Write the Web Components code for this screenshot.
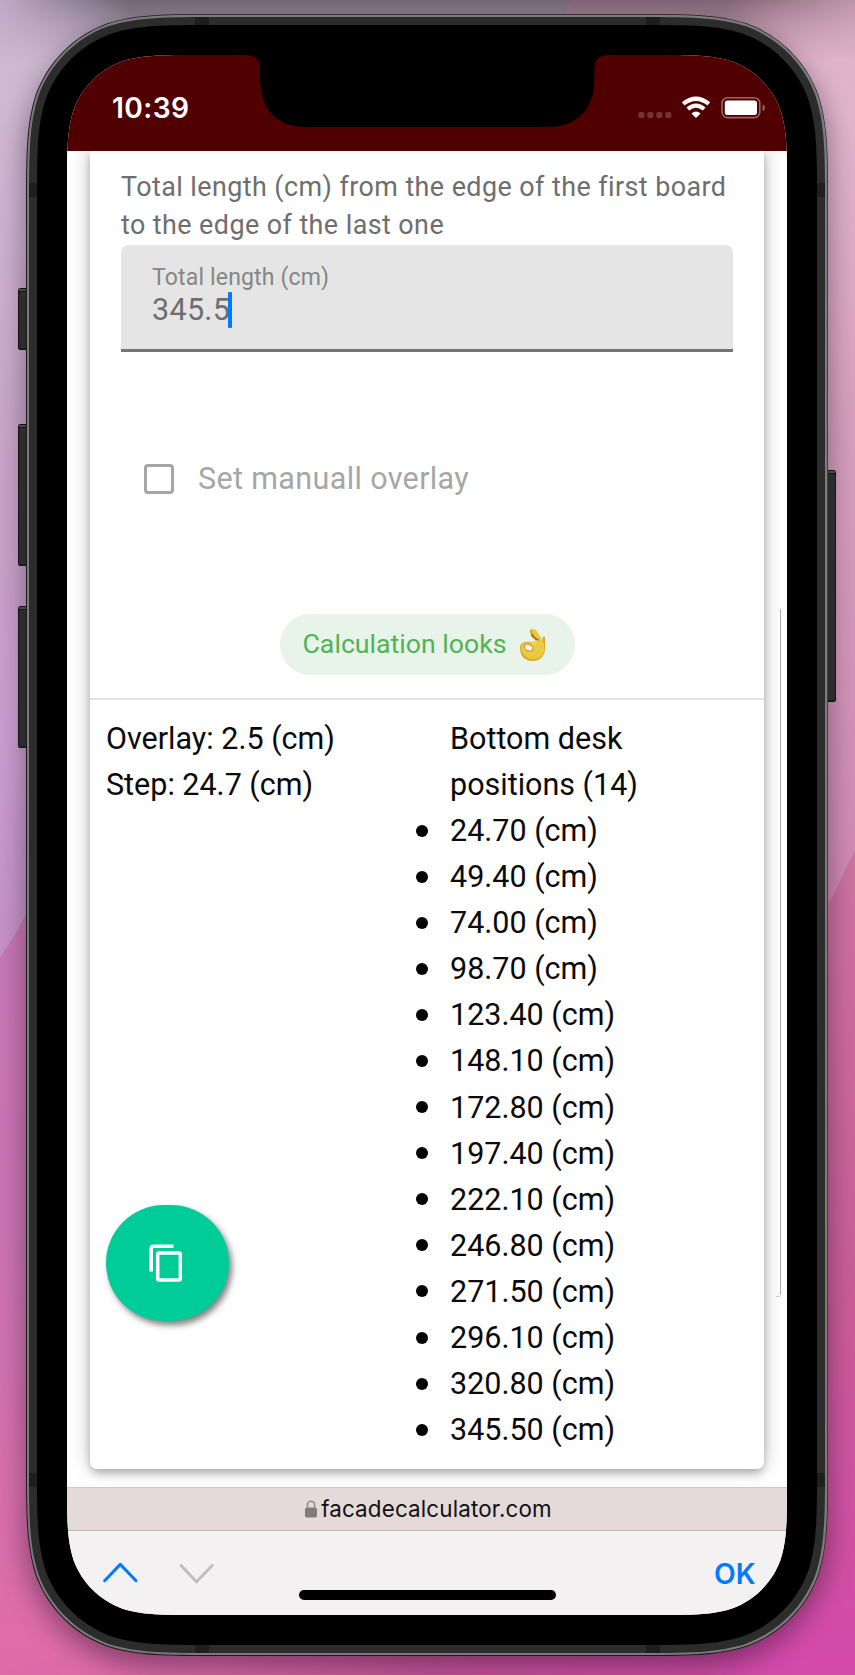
<!DOCTYPE html>
<html lang="en">
<head>
<meta charset="utf-8">
<title>Facade calculator</title>
<style>
html,body{margin:0;height:1675px;overflow:hidden}
body{font-family:Roboto,"Liberation Sans",sans-serif}
</style>
</head>
<body>
<wall-paper>
  <phone-frame>
    <phone-status time="10:39"></phone-status>
    <page-view>
      <calc-card>
        <number-field slot="form" label="Total length (cm)" value="345.5">Total length (cm) from the edge of the first board<br>to the edge of the last one</number-field>
        <check-row slot="form">Set manuall overlay</check-row>
        <result-chip slot="form">Calculation looks</result-chip>
        <div slot="summary">Overlay: 2.5 (cm)</div>
        <div slot="summary">Step: 24.7 (cm)</div>
        <position-list slot="positions" heading="Bottom desk positions (14)" values="24.70 49.40 74.00 98.70 123.40 148.10 172.80 197.40 222.10 246.80 271.50 296.10 320.80 345.50"></position-list>
        <copy-fab slot="fab"></copy-fab>
      </calc-card>
    </page-view>
    <url-bar>facadecalculator.com</url-bar>
    <input-toolbar>OK</input-toolbar>
  </phone-frame>
</wall-paper>
<script>
function define(name, markup, init) {
  const t = document.createElement('template');
  t.innerHTML = markup;
  customElements.define(name, class extends HTMLElement {
    connectedCallback() {
      if (this.shadowRoot) return;
      const root = this.attachShadow({mode: 'open'});
      root.appendChild(t.content.cloneNode(true));
      if (init) init.call(this, root);
    }
  });
}

// Rounded rectangle with continuous-curvature corners.
function smoothRect(x, y, w, h, r) {
  const corner = [[1.52866, 0], [1.08849, 0], [.86841, 0], [.63149, .07491], [.37282, .16906], [.16906, .37282], [.07491, .63149], [0, .86841], [0, 1.08849], [0, 1.52866]];
  const side = (cx, cy, sx, sy, rev) => {
    const p = corner.map(([a, b]) => `${(cx + sx * a * r).toFixed(2)} ${(cy + sy * b * r).toFixed(2)}`);
    if (rev) p.reverse();
    return `L${p[0]}C${p.slice(1).join(' ')}`;
  };
  return ('M' + `${x + w / 2} ${y}` + side(x + w, y, -1, 1) + side(x + w, y + h, -1, -1, true) + side(x, y + h, 1, -1) + side(x, y, 1, 1, true) + 'Z');
}

define('wall-paper', `
<style>
:host{display:block;position:relative;width:855px;height:1675px;overflow:hidden}
svg{position:absolute;inset:0}
.body{position:relative;box-sizing:border-box;height:100%;padding:14px 27px 19px 26px}
</style>
<svg width="855" height="1675">
  <defs>
    <linearGradient id="ul" x1="0" y1="0" x2="0" y2="1"><stop offset="0" stop-color="#c7b2cd"/><stop offset=".1" stop-color="#d0bad3"/><stop offset=".5" stop-color="#c8a3c8"/><stop offset=".8" stop-color="#ca9ccf"/><stop offset="1" stop-color="#c690c8"/></linearGradient>
    <linearGradient id="ur" x1="0" y1="0" x2="0" y2="1"><stop offset="0" stop-color="#dfb0c8"/><stop offset=".12" stop-color="#e2b5cd"/><stop offset=".5" stop-color="#d59dbe"/><stop offset="1" stop-color="#cf88b1"/></linearGradient>
    <linearGradient id="ll" x1="0" y1="0" x2="0" y2="1"><stop offset="0" stop-color="#c67ab5"/><stop offset=".55" stop-color="#cb74b3"/><stop offset="1" stop-color="#e06ca8"/></linearGradient>
    <linearGradient id="lr" x1="0" y1="0" x2="0" y2="1"><stop offset="0" stop-color="#ce74a1"/><stop offset=".5" stop-color="#ca5f98"/><stop offset="1" stop-color="#d44aaa"/></linearGradient>
    <linearGradient id="bottom"><stop offset="0" stop-color="#dd6ca9"/><stop offset=".15" stop-color="#dc69a8"/><stop offset=".5" stop-color="#c9559c"/><stop offset="1" stop-color="#d34aaa"/></linearGradient>
    <linearGradient id="top" x1="0" y1="0" x2="0" y2="1"><stop offset="0" stop-color="#000" stop-opacity=".42"/><stop offset=".4" stop-color="#000" stop-opacity=".22"/><stop offset="1" stop-color="#000" stop-opacity="0"/></linearGradient>
    <linearGradient id="sides"><stop offset="0" stop-color="#fff" stop-opacity=".1"/><stop offset=".15" stop-color="#fff"/><stop offset=".85" stop-color="#fff"/><stop offset="1" stop-color="#fff" stop-opacity=".35"/></linearGradient>
    <mask id="m"><rect width="855" height="70" fill="url(#sides)"/></mask>
  </defs>
  <path d="M0 0H600V960H0Z" fill="url(#ul)"/>
  <path d="M571 0H855V940H400V300Q545 80 571 0Z" fill="url(#ur)"/>
  <path d="M0 957Q15 937 28 910L430 700V1675H0Z" fill="url(#ll)"/>
  <path d="M855 850L825 912L430 1000V1675H855Z" fill="url(#lr)"/>
  <path d="M200 1640H660V1675H0V1668Z" fill="url(#bottom)"/>
  <rect x="60" y="1630" width="735" height="45" fill="url(#bottom)"/>
  <rect width="855" height="60" fill="url(#top)" mask="url(#m)"/>
</svg>
<div class="body"><slot></slot></div>`);

define('phone-frame', `
<style>
:host{display:block;position:relative;width:802px;height:1642px}
.shadow{position:absolute;inset:2px;border-radius:125px;box-shadow:0 10px 28px 2px rgba(15,0,20,.42)}
svg{position:absolute;left:-10px;top:-2px;overflow:visible}
.notch{left:0;top:0}
.screen{position:absolute;left:41px;top:41px;width:720px;height:1560px;display:flex;flex-direction:column;background:#fff}
</style>
<div class="shadow"></div>
<svg class="case" width="822" height="1646"><g transform="translate(-16 -12)">
  <g id="buttons"></g>
  <path id="rim" fill="#1b1b1b"/><path id="metal" fill="#7b7b7a"/><path id="band" fill="#2c2c2c"/>
  <path fill="#1e1e1e" d="M195 17h14v8h-14zM646 17h14v8h-14zM195 1645h14v8h-14zM646 1645h14v8h-14zM29 183h8v14h-8zM817 183h8v14h-8zM29 1473h8v14h-8zM817 1473h8v14h-8z"/>
  <path id="bezel" fill="#000"/>
</g></svg>
<div class="screen"><slot></slot></div>
<svg class="notch" width="802" height="200"><g transform="translate(-26 -14)">
  <path d="M245 54V55C255 55 260 59 260 69V78C260 109 276 127 307 127H547C578 127 594.5 109 594.5 78V69C594.5 59 599 55 609 55V54Z" fill="#000"/>
</g></svg>`, function (root) {
  const set = (id, ...a) => root.getElementById(id).setAttribute('d', smoothRect(...a));
  set('rim', 26, 14, 802, 1642, 128);
  set('metal', 27, 14.8, 800.4, 1640.2, 127);
  set('band', 29, 17, 796, 1636, 125);
  set('bezel', 37, 25, 780, 1620, 117);
  root.querySelector('.screen').style.clipPath = `path("${smoothRect(0, 0, 720, 1560, 87)}")`;
  const bar = (x, y, h) => `<rect x="${x}" y="${y}" width="12" height="${h}" rx="2.5" fill="#151515"/><rect x="${x + 1}" y="${y + 1}" width="10" height="2" fill="#4a4a4a"/><rect x="${x + 1}" y="${y + 4}" width="10" height="${h - 5.5}" rx="1.5" fill="#2c2c2c"/>`;
  root.getElementById('buttons').innerHTML = bar(18, 288, 62) + bar(18, 424, 142) + bar(18, 606, 142) + bar(824, 470, 232);
});

define('phone-status', `
<style>
:host{display:flex;box-sizing:border-box;height:96px;flex:none;background:#500000;color:#fff;justify-content:space-between;align-items:flex-start;padding:34px 22px 0 45px}
b{font:600 28.2px/38px Inter,sans-serif;letter-spacing:.4px}
svg{margin-top:5px}
</style>
<b></b>
<svg width="128" height="30" viewBox="637 94 128 30">
  <g fill="#733"><rect x="638.3" y="112" width="6" height="6" rx="1.7"/><rect x="647.4" y="112" width="6" height="6" rx="1.7"/><rect x="656.3" y="112" width="6" height="6" rx="1.7"/><rect x="665.3" y="112" width="6" height="6" rx="1.7"/></g>
  <g fill="none" stroke="#fff" stroke-width="4.2"><path d="M683.2 103.9Q696 93.6 708.8 103.9"/><path d="M687.8 109Q696 102.2 704.2 109"/></g>
  <path d="M691.4 113.6Q696 109.2 700.6 113.6L696 118Z" fill="#fff"/>
  <rect x="722" y="97.8" width="37.8" height="19.8" rx="5.5" fill="none" stroke="#966" stroke-width="1.6"/>
  <rect x="724.8" y="100.4" width="32.2" height="14.6" rx="2.8" fill="#fff"/>
  <path d="M762.6 104.2Q765 105.5 765 107.7Q765 110 762.6 111.2Z" fill="#966"/>
</svg>`, function (root) { root.querySelector('b').textContent = this.getAttribute('time'); });

define('page-view', `
<style>
:host{display:flex;flex-direction:column;position:relative;height:1336px;flex:none;overflow:hidden;background:#fff;padding:0 23px;box-sizing:border-box}
i{position:absolute;right:6px;top:458px;width:1px;height:686px;background:#aaa}
i::after{content:"";position:absolute;right:1px;bottom:-2px;width:4px;height:1px;background:#ccc}
</style>
<slot></slot><i></i>`);

define('calc-card', `
<style>
:host{display:block;position:relative;box-sizing:border-box;height:1318px;background:#fff;border-radius:0 0 7px 7px;box-shadow:0 5px 9px -1px rgba(0,0,0,.25),0 -2px 20px rgba(0,0,0,.25);font-size:30.5px;line-height:46.1px;color:#0a0a0a}
.form{box-sizing:border-box;height:549px;border-bottom:2px solid #e2e2e2;padding:16px 31px 0;display:flex;flex-direction:column}
.results{display:grid;grid-template-columns:344px 1fr;padding:15.8px 16px 0}
.fab{position:absolute;left:15.5px;top:1054px}
</style>
<div class="form"><slot name="form"></slot></div>
<div class="results"><div><slot name="summary"></slot></div><slot name="positions"></slot></div>
<div class="fab"><slot name="fab"></slot></div>`);

define('number-field', `
<style>
:host{display:block;color:#6e6e6e}
.hint{box-sizing:border-box;padding-top:1px;font-size:26.88px;line-height:38.4px;letter-spacing:.44px;height:78px;white-space:nowrap}
.box{box-sizing:border-box;height:107px;background:#e5e5e5;border-bottom:3.5px solid #757575;border-radius:7px 7px 0 0;padding:19px 31px 0}
label{display:block;font-size:23.04px;line-height:28px;height:28px;letter-spacing:.15px;color:#868686}
.value{display:flex;align-items:center;height:36px;line-height:36px;font-size:30.5px;letter-spacing:.3px}
.value i{width:3.6px;height:36px;background:#007aff;border-radius:1px;margin-left:-2px}
</style>
<div class="hint"><slot></slot></div>
<div class="box"><label></label><div class="value"><span></span><i></i></div></div>`, function (root) {
  root.querySelector('label').textContent = this.getAttribute('label');
  root.querySelector('span').textContent = this.getAttribute('value');
});

define('check-row', `
<style>
:host{display:flex;align-items:center;gap:24px;margin:103px 0 0 23px;height:48px;color:#a6a6a6;letter-spacing:.36px}
i{box-sizing:border-box;width:30px;height:30px;border:3px solid #a6a6a6;border-radius:4px}
</style><i></i><span><slot></slot></span>`);

define('result-chip', `
<style>
:host{display:flex;align-items:center;align-self:center;box-sizing:border-box;width:295px;height:61px;border-radius:31px;margin-top:111px;padding-left:23px;background:#e8f3e9;color:#50b355;font-size:26.7px}
svg{margin-left:12.5px}
</style><span><slot></slot></span>
<svg width="27" height="34" viewBox="0 0 28 35" role="img" aria-label="OK hand">
  <path d="M12.1 1.5C14 .4 16 1.5 17 4L20 10.4 24.2 13.1 24.6 9.8C25 8.3 26.8 8.5 27 10V21C27 29 21.5 34 14.3 34 7 34 2.2 30 1.6 24.3 .8 20.8 .8 17.9 2.5 16.4 4.8 14.2 9 13.3 13.6 15 15.2 14 17.2 12.7 18.2 12.2L13 6.8C10.7 4.4 10.7 2.4 12.1 1.5Z" fill="#d9aa21"/>
  <path d="M14 1.4Q17.5 .4 19.6 4.6L24.6 13.4Q26.6 16.4 26.4 21.5C26.2 29 20.4 32.6 14.2 32.1 7.4 31.5 3.3 27.2 2.5 22.7 2 18.8 2.7 16.2 7 15.4 11.5 14.8 15.7 16.1 18.2 12.7L15 7.3Q12 3.8 14 1.4Z" fill="#ecc943"/>
  <path d="M17.2 9.8Q14 5.2 12.5 5.2L12.7 8.5 17.8 12.8 15.3 16.2 19.7 15.2 20.6 11.6Z" fill="#a8721a"/>
  <path d="M14 16.6L18.6 14" stroke="#efd154" stroke-width="3" stroke-linecap="round"/>
  <ellipse cx="10" cy="20.2" rx="4.6" ry="3.3" transform="rotate(25 10 20.2)" fill="#fff6dc" stroke="#c48a18" stroke-width="1"/>
</svg>`);

define('position-list', `
<style>
:host{display:block}
h3{font:inherit;margin:0;width:230px}
ul{list-style:none;margin:0;padding:0}
li{display:flex;align-items:center;height:46.1px}
li::before{content:"";width:12px;height:12px;border-radius:50%;background:#000;margin:0 22px 1px -34px}
</style><h3></h3><ul></ul>`, function (root) {
  root.querySelector('h3').textContent = this.getAttribute('heading');
  for (const v of this.getAttribute('values').split(' ')) {
    const li = document.createElement('li');
    li.textContent = v + ' (cm)';
    root.querySelector('ul').append(li);
  }
});

define('copy-fab', `
<style>
:host{display:grid;width:123px;height:116px;border-radius:60px;background:#00cc9a;box-shadow:3px 4px 6px rgba(0,0,0,.5)}
svg{margin:38.5px 0 0 43.5px}
</style>
<svg width="34" height="38" viewBox="0 0 34 38" fill="none" stroke="#fff" stroke-width="3.5"><path d="M2.2 27.5V4.5Q2.2 2.2 4.5 2.2H24.5"/><rect x="8.7" y="8.9" width="22.6" height="27" rx="1.5"/></svg>`);

define('url-bar', `
<style>
:host{display:flex;justify-content:center;align-items:center;gap:4.5px;box-sizing:border-box;height:44px;flex:none;background:#e5dada;border-top:1px solid #cfc6c8;border-bottom:1px solid #beb4b6;color:#111;font:400 22.4px/40px Inter,sans-serif;letter-spacing:.15px;padding-left:2.5px}
svg{margin-top:-1px}
</style>
<svg width="12" height="18" viewBox="0 0 12 18"><rect y="7.6" width="12" height="10" rx="1.8" fill="#837a7e"/><path d="M2.4 8V5Q2.4 1.2 6 1.2 9.6 1.2 9.6 5V8" fill="none" stroke="#968d91" stroke-width="1.6"/></svg>
<span><slot></slot></span>`);

define('input-toolbar', `
<style>
:host{display:flex;box-sizing:border-box;height:84px;flex:none;background:#f3f1f1;position:relative;justify-content:space-between;padding:23px 31.5px 0 35px;color:#007aff;font:600 28.2px/40px Inter,sans-serif}
svg{margin-top:6px}
i{position:absolute;left:231.5px;top:59px;width:257.5px;height:9.5px;border-radius:5px;background:#000}
</style>
<svg width="113" height="24" fill="none" stroke-width="3" stroke-linecap="round" stroke-linejoin="round"><path d="M2.6 20.7L18.3 4.4 34 20.7" stroke="#007aff"/><path d="M79 5.5L94.5 21.8 110.2 5.5" stroke="#bfbfbf"/></svg>
<span><slot></slot></span><i></i>`);
</script>
</body>
</html>
